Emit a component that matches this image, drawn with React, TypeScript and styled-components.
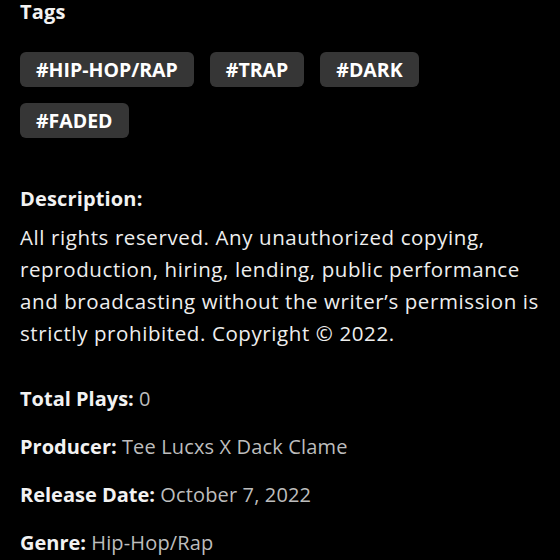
import React from "react";
import styled, { createGlobalStyle } from "styled-components";

const Global = createGlobalStyle`
  html, body { margin: 0; padding: 0; background: #000; }
  body { font-family: "Open Sans", "Liberation Sans", sans-serif; }
`;

const Page = styled.div`
  width: 560px;
  height: 560px;
  overflow: hidden;
  box-sizing: border-box;
  padding: 0 20px;
  background: #000;
  color: #f2f2f2;
`;

const Heading = styled.h3<{ $lh?: number }>`
  margin: 0;
  font-size: 20px;
  font-weight: 700;
  line-height: ${(p) => p.$lh ?? 24}px;
  letter-spacing: 0.15px;
  color: #f2f2f2;
`;

const TagList = styled.div`
  display: flex;
  flex-wrap: wrap;
  gap: 16px 16px;
  margin-top: 28px;
`;

const Tag = styled.span`
  display: inline-flex;
  align-items: center;
  height: 35px;
  padding: 0 16px;
  border-radius: 6px;
  background: #363636;
  color: #fff;
  font-size: 19.5px;
  font-weight: 700;
`;

const DescSection = styled.section`
  margin-top: 45px;
`;

const Body = styled.p`
  margin: 6px 0 0;
  font-size: 20.5px;
  line-height: 32px;
  letter-spacing: 0.6px;
  color: #eeeeee;
`;

const MetaList = styled.dl`
  margin: 34px 0 0;
  display: flex;
  flex-direction: column;
  gap: 16px;
`;

const MetaRow = styled.div`
  font-size: 20px;
  line-height: 32px;
`;

const Label = styled.dt`
  display: inline;
  font-weight: 700;
  color: #f2f2f2;
`;

const Value = styled.dd`
  display: inline;
  margin: 0;
  font-weight: 400;
  letter-spacing: 0.15px;
  color: #bdbdbd;
`;

const tags = ["#HIP-HOP/RAP", "#TRAP", "#DARK", "#FADED"];
const meta = [
  ["Total Plays:", "0"],
  ["Producer:", "Tee Lucxs X Dack Clame"],
  ["Release Date:", "October 7, 2022"],
  ["Genre:", "Hip-Hop/Rap"],
];

export default function App() {
  return (
    <>
      <Global />
      <Page>
        <Heading>Tags</Heading>
        <TagList>
          {tags.map((t) => (
            <Tag key={t}>{t}</Tag>
          ))}
        </TagList>
        <DescSection>
          <Heading $lh={32}>Description:</Heading>
          <Body>
            All rights reserved. Any unauthorized copying, reproduction, hiring,
            lending, public performance and broadcasting without the writer’s
            permission is strictly prohibited. Copyright © 2022.
          </Body>
        </DescSection>
        <MetaList>
          {meta.map(([l, v]) => (
            <MetaRow key={l}>
              <Label>{l}</Label> <Value>{v}</Value>
            </MetaRow>
          ))}
        </MetaList>
      </Page>
    </>
  );
}
